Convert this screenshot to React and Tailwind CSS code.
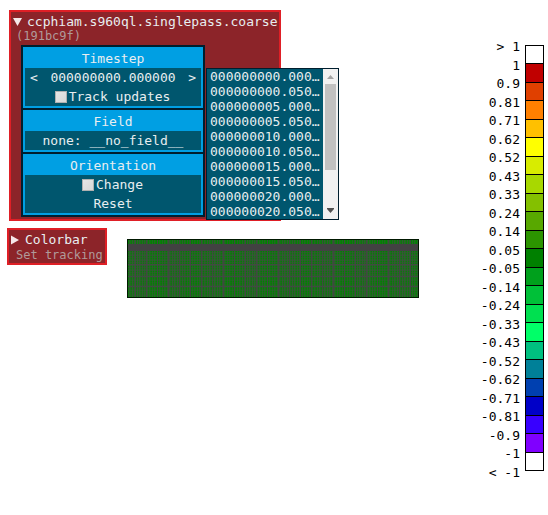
import { useState } from "react";

const mono = "font-['DejaVu_Sans_Mono','Liberation_Mono',monospace]";

const timesteps = [
  "000000000.000000", "000000000.050000", "000000005.000000", "000000005.050000",
  "000000010.000000", "000000010.050000", "000000015.000000", "000000015.050000",
  "000000020.000000", "000000020.050000",
];

const labels = [
  "> 1", "1", "0.9", "0.81", "0.71", "0.62", "0.52", "0.43", "0.33", "0.24", "0.14", "0.05",
  "-0.05", "-0.14", "-0.24", "-0.33", "-0.43", "-0.52", "-0.62", "-0.71", "-0.81", "-0.9", "-1", "< -1",
];

const swatches = [
  "bg-white", "bg-[#c00000]", "bg-[#e04000]", "bg-[#ff8000]", "bg-[#ffc000]", "bg-[#ffff00]",
  "bg-[#d8ec00]", "bg-[#a8d800]", "bg-[#84c000]", "bg-[#58a800]", "bg-[#2c9400]", "bg-[#008000]",
  "bg-[#00a01c]", "bg-[#00c038]", "bg-[#00e050]", "bg-[#00ff68]", "bg-[#00c080]", "bg-[#008098]",
  "bg-[#0040b0]", "bg-[#0000c8]", "bg-[#3800ff]", "bg-[#8000ff]", "bg-white",
];

// Mesh lines lie closer together than the pixels, so their weight beats across the width.
const columns = Array.from({ length: 290 }, (_, i) => {
  if (i % 11 === 7) return { x: i, color: "#484048", opacity: 0.85 };
  const weight = [0.1, 0.55, 0.3, 0.05, 0.6][i % 5] + 0.12 * Math.sin(i / 6);
  return { x: i, color: "#484848", opacity: Math.max(0, weight) };
});

const rows = Array.from({ length: 46 }, (_, i) => {
  const y = i + 12;
  if ([25, 37, 47].includes(y)) return { y, opacity: 0.85 };
  return { y, opacity: [0.05, 0.4, 0.1, 0.3, 0.5][i % 5] * (y < 36 ? 1 : 0.6) };
});

function Section({ title, children }) {
  return (
    <section className="border-2 border-[#009fe3] bg-[#009fe3] text-center">
      <h2 className="h-[19px]">{title}</h2>
      <div className="bg-[#00566e]">{children}</div>
    </section>
  );
}

function Check({ id, label }) {
  return (
    <div className="flex h-[19px] items-center justify-center gap-[2px] pr-px">
      <input
        id={id}
        type="checkbox"
        className="size-3 appearance-none border border-[#b0b0b0] bg-linear-to-br from-[#e6e6e6] to-[#d8d8d8] checked:from-[#009fe3] checked:to-[#009fe3]"
      />
      <label htmlFor={id}>{label}</label>
    </div>
  );
}

function TimestepList({ onPick }) {
  return (
    <div className="absolute top-0 left-full ml-[5px] flex w-[133px] border border-[#001e2e] bg-[#00566e]">
      <ul className="min-w-0 flex-1 pr-[2px] pl-[3px] text-left">
        {timesteps.map((t) => (
          <li key={t} className="h-[15px]">
            <button type="button" onClick={() => onPick(t)} className="block w-full truncate text-left leading-[15px]">
              {t}
            </button>
          </li>
        ))}
      </ul>
      <div className="flex w-[15px] flex-col items-center bg-[#f1f1f1]">
        <svg className="h-[15px] w-[15px]" viewBox="0 0 15 15" aria-hidden="true">
          <path d="M4 10h7L7.5 6z" fill="#a3a3a3" />
        </svg>
        <div className="h-[86px] w-[11px] bg-[#c1c1c1]" />
        <svg className="mt-auto h-[15px] w-[15px]" viewBox="0 0 15 15" aria-hidden="true">
          <path d="M4 4h7v1L7.5 9L4 5z" fill="#505050" />
        </svg>
      </div>
    </div>
  );
}

function Triangle({ open }) {
  return (
    <svg className="mr-1 h-[10px] w-[10px] shrink-0" viewBox="0 0 10 10" aria-hidden="true">
      <path d={open ? "M0 1h9L4.500 9z" : "M0 0.500v9l8-4.500z"} fill="#f4e8e8" />
    </svg>
  );
}

function Mesh() {
  return (
    <svg className="h-[60px] w-[293px]" viewBox="0 0 293 60" shapeRendering="crispEdges" role="img" aria-label="Mesh">
      <rect width="292" height="59" fill="#008400" />
      {columns.map((c) => (
        <rect key={c.x} x={c.x + 1} y="1" width="1" height="57" fill={c.color} fillOpacity={c.opacity} />
      ))}
      {rows.map((r) => (
        <rect key={r.y} x="1" y={r.y} width="290" height="1" fill="#484448" fillOpacity={r.opacity} />
      ))}
      <rect y="5" width="292" height="7" fill="#424242" />
      <rect x="0.500" y="0.500" width="291" height="58" fill="none" stroke="#001800" />
    </svg>
  );
}

export default function App() {
  const [step, setStep] = useState(0);
  const move = (d) => setStep((s) => Math.max(0, Math.min(timesteps.length - 1, s + d)));

  return (
    <main className={`flex min-h-screen items-start justify-between bg-white text-[13px] leading-[19px] text-[#e8eef0] ${mono}`}>
      <div className="pt-[10px] pl-[7px]">
        <section className="ml-[2px] w-max border-2 border-[#df1f26] bg-[#8c2429] pb-[2px]">
          <button type="button" className="flex h-[17px] items-center pr-[2px] pl-[2px] pt-[2px]">
            <Triangle open />
            <span>ccphiam.s960ql.singlepass.coarse</span>
          </button>
          <p className="h-4 pl-[5px] text-xs leading-[14px] text-[#b09a9a]">(191bc9f)</p>
          <div className="ml-[10px] flex w-[184px] flex-col gap-[2px] border-2 border-[#001e2e] bg-[#001e2e]">
            <Section title="Timestep">
              <div className="relative flex h-[19px] justify-between px-[5px]">
                <button type="button" aria-label="Previous timestep" onClick={() => move(-1)}>&lt;</button>
                <output>{timesteps[step]}</output>
                <button type="button" aria-label="Next timestep" onClick={() => move(1)}>&gt;</button>
                <TimestepList onPick={(t) => setStep(timesteps.indexOf(t))} />
              </div>
              <Check id="track" label="Track updates" />
            </Section>
            <Section title="Field">
              <button type="button" className="block h-[19px] w-full">none: __no_field__</button>
            </Section>
            <Section title="Orientation">
              <Check id="change" label="Change" />
              <button type="button" className="block h-[19px] w-full">Reset</button>
            </Section>
          </div>
        </section>

        <div className="mt-[7px] flex items-start gap-5">
          <section className="w-[100px] border-2 border-[#df1f26] bg-[#8c2429]">
            <button type="button" className="flex h-[17px] items-center pt-[2px] pl-[2px]">
              <Triangle />
              <span>Colorbar</span>
            </button>
            <button type="button" className="block h-4 pl-[7px] text-xs leading-[14px] text-[#b09a9a]">Set tracking</button>
          </section>
          <div className="pt-[11px]">
            <Mesh />
          </div>
        </div>
      </div>

      <div className="flex gap-[5px] pr-1 text-black">
        <ol className="mt-[37px] grid h-[444px] auto-rows-fr text-right">
          {labels.map((l) => (
            <li key={l}>{l}</li>
          ))}
        </ol>
        <div className="mt-[45px] grid h-[426px] w-[19px] auto-rows-fr gap-px border border-black bg-black">
          {swatches.map((c, i) => (
            <div key={i} className={c} />
          ))}
        </div>
      </div>
    </main>
  );
}
